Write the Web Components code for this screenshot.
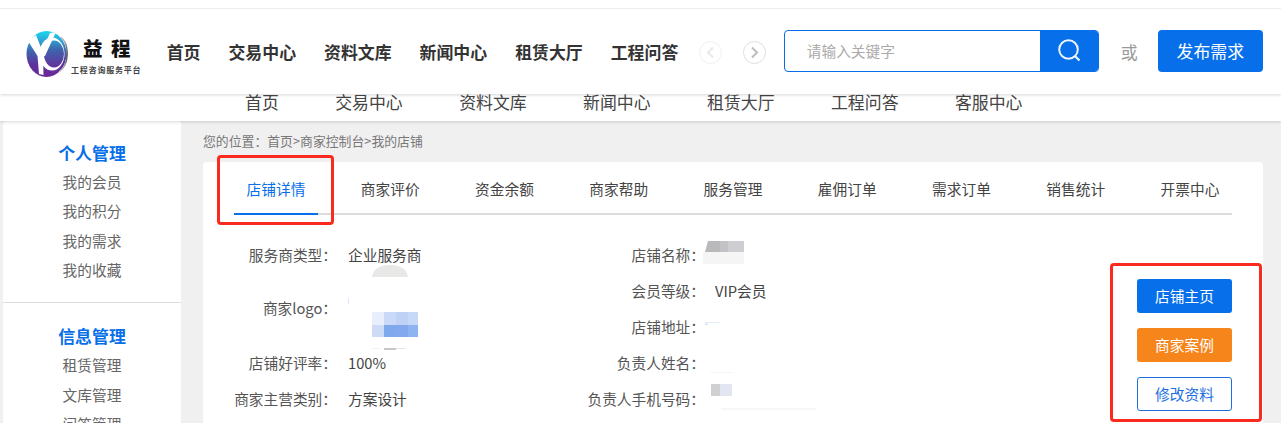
<!DOCTYPE html>
<html lang="zh-CN">
<head>
<meta charset="utf-8">
<title>我的店铺</title>
<style>
html,body{margin:0;padding:0;height:423px;overflow:hidden;background:#f1f0f1;}
body{font-family:"Noto Sans CJK SC","Noto Sans",sans-serif;}
</style>
</head>
<body>
<site-page>
  <site-header></site-header>
  <sub-nav>
    <span>首页</span><span>交易中心</span><span>资料文库</span><span>新闻中心</span><span>租赁大厅</span><span>工程问答</span><span>客服中心</span>
  </sub-nav>
  <page-body>
    <side-bar slot="side">
      <side-group title="个人管理"><span>我的会员</span><span>我的积分</span><span>我的需求</span><span>我的收藏</span></side-group>
      <side-group title="信息管理" second><span>租赁管理</span><span>文库管理</span><span>问答管理</span></side-group>
    </side-bar>
    <main-col slot="main">
      <bread-crumb>您的位置：首页&gt;商家控制台&gt;我的店铺</bread-crumb>
      <shop-card>
        <tab-bar>
          <tab-item active>店铺详情</tab-item><tab-item>商家评价</tab-item><tab-item>资金余额</tab-item><tab-item>商家帮助</tab-item><tab-item>服务管理</tab-item><tab-item>雇佣订单</tab-item><tab-item>需求订单</tab-item><tab-item>销售统计</tab-item><tab-item>开票中心</tab-item>
        </tab-bar>
        <info-panel>
          <info-col slot="left" style="width:114px">
            <info-row label="服务商类型：" w="103" gap="11">企业服务商</info-row>
            <info-row label="商家logo：" w="103" gap="11" tall>
              <svg width="72" height="90" viewBox="348 262 72 90" style="display:block;margin-top:-11px" aria-hidden="true">
                <path d="M372 277 Q374 265 390 265 Q406 265 408 277 Z" fill="#e8e8e6"/>
                <rect x="348" y="298" width="1" height="6" fill="#dbe7fa"/>
                <rect x="372" y="312" width="12" height="13" fill="#e8eefb"/><rect x="384" y="312" width="12" height="13" fill="#c9d9f7"/><rect x="396" y="312" width="12" height="13" fill="#bfd2f5"/><rect x="408" y="312" width="10" height="13" fill="#c8d9f7"/>
                <rect x="372" y="325" width="12" height="12" fill="#cddbf6"/><rect x="384" y="325" width="12" height="12" fill="#80a9ed"/><rect x="396" y="325" width="12" height="12" fill="#84a8ee"/><rect x="408" y="325" width="10" height="12" fill="#8fb3f0"/>
                <rect x="372" y="348" width="8" height="1" fill="#f2f2f2"/><rect x="384" y="348" width="12" height="2" fill="#c8c8c8"/><rect x="396" y="348" width="10" height="1" fill="#e6e6e6"/>
              </svg>
            </info-row>
            <info-row label="店铺好评率：" w="103" gap="11">100%</info-row>
            <info-row label="商家主营类别：" w="103" gap="11">方案设计</info-row>
          </info-col>
          <info-col slot="right">
            <info-row label="店铺名称：" w="125">
              <svg width="41" height="24" viewBox="703 240 41 24" style="display:block;margin:3px 0 0 -12px" aria-hidden="true">
                <rect x="703" y="252" width="41" height="12" fill="#f5f5f5"/>
                <path d="M705 252l3-11h12v11z" fill="#b9b9bb"/><rect x="720" y="241" width="8" height="11" fill="#c2c2c4"/><rect x="728" y="241" width="16" height="11" fill="#cdced2"/>
              </svg>
            </info-row>
            <info-row label="会员等级：" w="125">VIP会员</info-row>
            <info-row label="店铺地址：" w="125"><svg width="16" height="6" viewBox="705 321 16 6" style="display:block;margin:12px 0 0 -10px" aria-hidden="true"><rect x="705" y="322" width="15" height="1" fill="#e4eefb"/><rect x="705" y="323" width="3" height="2" fill="#dbe9fb"/></svg></info-row>
            <info-row label="负责人姓名：" w="125"><svg width="23" height="2" viewBox="710 372 23 2" style="display:block;margin:27px 0 0 -5px" aria-hidden="true"><rect x="710" y="372" width="23" height="1" fill="#f6f6f6"/></svg></info-row>
            <info-row label="负责人手机号码：" w="125"><svg width="106" height="26" viewBox="711 384 106 26" style="display:block;margin:3px 0 0 -4px" aria-hidden="true"><rect x="711" y="384" width="9" height="12" fill="#d0cfd1"/><rect x="720" y="384" width="12" height="12" fill="#e2e6f0"/><rect x="721" y="408" width="95" height="2" fill="#f6f6f6"/></svg></info-row>
          </info-col>
          <btn-col slot="btns">
            <act-btn kind="blue">店铺主页</act-btn>
            <act-btn kind="orange">商家案例</act-btn>
            <act-btn kind="line">修改资料</act-btn>
          </btn-col>
        </info-panel>
        <red-frame style="left:14px;top:-7px;width:117px;height:70px"></red-frame>
        <red-frame style="left:907px;top:101px;width:152px;height:159px"></red-frame>
      </shop-card>
    </main-col>
  </page-body>
</site-page>
<script>
function def(name, html){
  customElements.define(name, class extends HTMLElement{
    constructor(){
      super();
      this.attachShadow({mode:'open'});
    }
    connectedCallback(){
      if(this._done) return; this._done=true;
      this.shadowRoot.innerHTML = typeof html==='function' ? html(this) : html;
    }
  });
}
const FONT='"Noto Sans CJK SC","Noto Sans",sans-serif';

def('site-page',`<style>:host{display:block;width:1281px;font-family:${FONT}}</style><slot></slot>`);

def('site-header',`<style>
:host{display:flex;align-items:center;position:relative;z-index:2;box-sizing:border-box;height:94px;padding:9px 0 0 26px;background:#fff;box-shadow:0 1px 3px rgba(0,0,0,.16);font-family:${FONT}}
:host::before{content:"";position:absolute;left:0;right:0;top:8px;height:1px;background:#ececec}
.logo{display:block;margin-top:4px}
.brand{margin-left:3px;width:70px;text-align:center;color:#111;font-weight:700;margin-top:8px}
.brand b{display:block;font-size:19.5px;line-height:24px;letter-spacing:8.5px;margin-right:-9px;padding-left:1px}
.brand i{display:block;font-style:normal;font-size:8px;line-height:12px;letter-spacing:.8px;color:#444;margin-top:4px;white-space:nowrap}
nav{display:flex;gap:28px;margin-left:25.7px;font-size:16.9px;font-weight:700;color:#333;white-space:nowrap;line-height:24px;margin-top:1px}
.arrows{display:flex;gap:21px;margin-left:20.5px;margin-top:1px}
.arrows svg{display:block}
.search{display:flex;box-sizing:border-box;width:315px;height:42px;margin-left:18px;border:1px solid #066fe9;border-radius:4px;overflow:hidden;background:#fff;margin-top:-1px}
.search span{flex:1;padding-left:22px;font-size:14.7px;line-height:40px;color:#aaa}
.search div{width:58px;background:#066fe9;display:flex;align-items:center;justify-content:center}
.or{margin-left:22px;font-size:16.9px;color:#999;line-height:24px;width:16px}
.pub{margin-left:21px;width:105px;height:42px;border-radius:4px;background:#066fe9;color:#fff;font-size:16.9px;line-height:42px;text-align:center;margin-top:-1px}
</style>
<svg class="logo" width="42" height="46" viewBox="0 0 42 46" aria-hidden="true">
  <defs>
    <linearGradient id="g" x1="0" y1="0" x2="0" y2="1"><stop offset="0" stop-color="#1cd9ec"/><stop offset=".2" stop-color="#2aa6d6"/><stop offset=".45" stop-color="#3f63ad"/><stop offset=".75" stop-color="#5f2f9c"/><stop offset="1" stop-color="#6b2a98"/></linearGradient>
    <linearGradient id="o" x1="0" y1="0" x2="0" y2="1"><stop offset="0" stop-color="#2f9ccd"/><stop offset=".35" stop-color="#3f63ad"/><stop offset="1" stop-color="#64309a"/></linearGradient>
    <linearGradient id="s" x1="0" y1="0" x2="0" y2="1"><stop offset="0" stop-color="#c8c8cc"/><stop offset=".5" stop-color="#3c3c40"/><stop offset="1" stop-color="#c8c8cc"/></linearGradient>
  </defs>
  <ellipse cx="20.5" cy="23" rx="20" ry="23" fill="url(#g)"/>
  <ellipse cx="26" cy="23" rx="12.5" ry="16.5" fill="#fff"/>
  <ellipse cx="28" cy="23" rx="10" ry="13.5" fill="url(#o)"/>
  <path d="M35 6 A20 21 0 0 1 41 23 A20 21 0 0 1 33 41" fill="none" stroke="url(#s)" stroke-width="1.4"/>
  <path d="M2 10 L10 4 L16 19 L24 2 L30 1 L19 25 L17 25 L17.5 44 L13 43 L11.5 25 Z" fill="#fff"/>
</svg>
<div class="brand"><b>益程</b><i>工程咨询服务平台</i></div>
<nav><span>首页</span><span>交易中心</span><span>资料文库</span><span>新闻中心</span><span>租赁大厅</span><span>工程问答</span></nav>
<div class="arrows">
  <svg width="23" height="23" viewBox="0 0 23 23" aria-hidden="true"><circle cx="11.5" cy="11.5" r="11" fill="#fff" stroke="#f0f0f0"/><path d="M14 6.5 L9 11.5 L14 16.5" fill="none" stroke="#e8e8e8" stroke-width="2"/></svg>
  <svg width="23" height="23" viewBox="0 0 23 23" aria-hidden="true"><circle cx="11.5" cy="11.5" r="11" fill="#fff" stroke="#dedede"/><path d="M9 6.5 L14 11.5 L9 16.5" fill="none" stroke="#bdbdbd" stroke-width="2"/></svg>
</div>
<div class="search"><span>请输入关键字</span><div><svg width="24" height="24" viewBox="0 0 24 24" aria-hidden="true"><circle cx="11.5" cy="10.5" r="9.3" fill="none" stroke="#fff" stroke-width="2" opacity=".92"/><path d="M18 17 L22.5 21.5" stroke="#fff" stroke-width="2.2" opacity=".92"/></svg></div></div>
<span class="or">或</span>
<div class="pub">发布需求</div>`);

def('sub-nav',`<style>
:host{display:block;position:relative;z-index:1;height:27px;background:#fff;box-shadow:0 1px 3px rgba(0,0,0,.16);overflow:hidden}
div{display:flex;gap:56.4px;padding-left:245px;font-size:16.9px;line-height:16px;color:#444;white-space:nowrap}
</style><div><slot></slot></div>`);

def('page-body',`<style>:host{display:flex;gap:22px;padding-left:3px;height:302px}</style><slot name="side"></slot><slot name="main"></slot>`);

def('side-bar',`<style>:host{display:block;box-sizing:border-box;width:178px;background:#fff;border-radius:3px 3px 0 0;overflow:hidden}</style><slot></slot>`);

def('side-group',el=>`<style>
:host{display:block;box-sizing:border-box;text-align:center;padding:20px 0 17.4px}
:host([second]){border-top:1px solid #dcdcdc;padding-top:21px}
h3{margin:0;font-size:16.9px;line-height:24px;font-weight:700;color:#066fe9}
.items{margin-top:2px;font-size:14.7px;line-height:${el.hasAttribute('second')?29.6:29.4}px;color:#666}
::slotted(span){display:block}
</style><h3>${el.getAttribute('title')}</h3><div class="items"><slot></slot></div>`);

def('main-col',`<style>:host{display:block;width:1060px}</style><slot></slot>`);

def('bread-crumb',`<style>:host{display:block;padding-top:10px;font-size:12.85px;line-height:20px;color:#777;white-space:nowrap}</style><slot></slot>`);

def('shop-card',`<style>:host{display:block;position:relative;margin-top:11px;box-sizing:border-box;height:270px;padding:0 31px;background:#fff;border-radius:4px 4px 0 0}</style><slot></slot>`);

def('tab-bar',`<style>:host{display:flex;justify-content:space-between;height:53px;box-sizing:border-box;border-bottom:2px solid #dcdcdc}</style><slot></slot>`);

def('tab-item',`<style>
:host{display:block;box-sizing:border-box;width:84px;height:53px;padding-top:3px;text-align:center;font-size:14.7px;line-height:48px;color:#444;white-space:nowrap}
:host([active]){color:#066fe9;border-bottom:2px solid #066fe9}
</style><slot></slot>`);

def('info-panel',`<style>:host{display:flex;padding-top:22px}
.r{margin-left:232px}.b{margin-left:auto;margin-top:42px}</style>
<slot name="left"></slot><div class="r"><slot name="right"></slot></div><div class="b"><slot name="btns"></slot></div>`);

def('info-col',`<style>:host{display:block}</style><slot></slot>`);

def('info-row',el=>`<style>
:host{display:flex;height:${el.hasAttribute('tall')?72:36}px;font-size:14.7px;line-height:${el.hasAttribute('tall')?70:36}px;color:#444;white-space:nowrap}
.l{box-sizing:border-box;width:${el.getAttribute('w')}px;flex:none;color:#555;white-space:nowrap;display:flex;justify-content:flex-end}
.v{margin-left:${el.getAttribute('gap')||10}px;color:#444}
</style><div class="l">${el.getAttribute('label')}</div><div class="v"><slot></slot></div>`);

def('btn-col',`<style>:host{display:flex;flex-direction:column;gap:15px;width:95px}</style><slot></slot>`);

def('act-btn',el=>{
  const k=el.getAttribute('kind');
  const s={blue:'background:#066fe9;color:#fff',orange:'background:#f6851b;color:#fff',line:'background:#fff;color:#1c6fe0;border:1px solid #1c6fe0'}[k];
  return `<style>:host{display:block;box-sizing:border-box;height:34px;border-radius:3px;font-size:14.7px;line-height:${k==='line'?32:34}px;text-align:center;${s}}</style><slot></slot>`;
});

def('red-frame',`<style>:host{display:block;position:absolute;box-sizing:border-box;border:3px solid #fb2a1e;border-radius:4px;pointer-events:none}</style>`);
</script>
</body>
</html>
